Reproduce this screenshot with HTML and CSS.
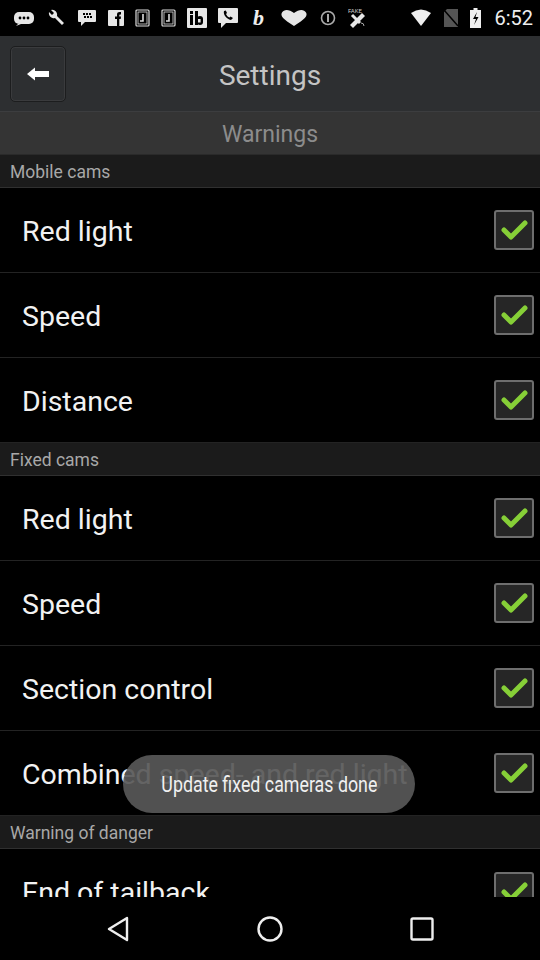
FILE: index.html
```html
<!DOCTYPE html>
<html>
<head>
<meta charset="utf-8">
<link rel="stylesheet" href="styles.css">
</head>
<body>
<div class="screen">
  <div class="statusbar">
    <div class="notif">
      <svg width="22" height="16" viewBox="0 0 22 16"><rect x="1" y="2" width="20" height="12" rx="5" fill="#e6e6e6"/><path d="M5 14 L3 16 L8 14Z" fill="#e6e6e6"/><circle cx="7" cy="8" r="1.4" fill="#000"/><circle cx="11" cy="8" r="1.4" fill="#000"/><circle cx="15" cy="8" r="1.4" fill="#000"/></svg>
      <svg width="20" height="20" viewBox="0 0 20 20"><path d="M3 4 A5 5 0 0 0 9 10 L16 17 L18 15 L11 8 A5 5 0 0 0 5 2 L8 5 L6 7 Z" fill="#e6e6e6"/></svg>
      <svg width="20" height="18" viewBox="0 0 20 18"><rect x="1" y="1" width="18" height="12" rx="1" fill="#e6e6e6"/><path d="M4 13 L4 17 L8 13Z" fill="#e6e6e6"/><g fill="#000"><rect x="6" y="4" width="2" height="2"/><rect x="9" y="4" width="2" height="2"/><rect x="12" y="4" width="2" height="2"/><rect x="7" y="7" width="2" height="2"/><rect x="10" y="7" width="2" height="2"/><rect x="13" y="7" width="2" height="2"/></g></svg>
      <svg width="16" height="16" viewBox="0 0 16 16"><rect x="0" y="0" width="16" height="16" rx="1" fill="#e6e6e6"/><path d="M9 16 V9 H7 V6.5 H9 V4.5 C9 2.8 10 2 11.5 2 H13 V4.5 H12 C11.5 4.5 11.3 4.8 11.3 5.2 V6.5 H13 L12.7 9 H11.3 V16Z" fill="#000"/></svg>
      <svg width="15" height="18" viewBox="0 0 15 18"><rect x="1" y="1" width="13" height="16" rx="1" fill="none" stroke="#ddd" stroke-width="1.2"/><rect x="3" y="3" width="9" height="12" fill="none" stroke="#ddd" stroke-width="0.8"/><path d="M8 5 V12 H5" fill="none" stroke="#ddd" stroke-width="1.6"/></svg>
      <svg width="15" height="18" viewBox="0 0 15 18"><rect x="1" y="1" width="13" height="16" rx="1" fill="none" stroke="#ddd" stroke-width="1.2"/><rect x="3" y="3" width="9" height="12" fill="none" stroke="#ddd" stroke-width="0.8"/><path d="M8 5 V12 H5" fill="none" stroke="#ddd" stroke-width="1.6"/></svg>
      <svg width="20" height="20" viewBox="0 0 20 20"><rect x="0" y="0" width="20" height="20" rx="1" fill="#e6e6e6"/><rect x="3" y="3" width="3" height="3" fill="#000"/><rect x="3" y="7" width="3" height="10" fill="#000"/><rect x="8" y="3" width="3" height="14" fill="#000"/><rect x="10" y="8" width="6" height="9" rx="3" fill="#000"/><rect x="11" y="11" width="2.6" height="3.5" fill="#e6e6e6"/></svg>
      <svg width="20" height="20" viewBox="0 0 20 20"><rect x="0" y="0" width="20" height="15" rx="1" fill="#e6e6e6"/><path d="M3 15 L3 20 L8 15Z" fill="#e6e6e6"/><path d="M6 3 C5 6 8 11 13 12 L15 10 L12.5 8.5 L11.5 9.5 C10 9 8.5 7.5 8 6 L9 5 L7.8 2.5Z" fill="#000"/></svg>
      <span class="bglyph">b</span>
      <svg width="30" height="18" viewBox="0 0 30 18"><path d="M15 17 C4 10 1 7 3 3.5 C5 0 10 0 15 4 C20 0 25 0 27 3.5 C29 7 26 10 15 17Z" fill="#e6e6e6"/></svg>
      <svg width="16" height="16" viewBox="0 0 16 16"><circle cx="8" cy="8" r="6.5" fill="none" stroke="#aaa" stroke-width="1.6"/><rect x="7" y="4" width="2" height="8" fill="#aaa"/></svg>
      <svg width="20" height="22" viewBox="0 0 20 22"><text x="1" y="6" font-size="6" fill="#ccc" font-family="Roboto">FAKE</text><path d="M3 18 L15 6 L18 9 L6 21Z" fill="#e6e6e6"/><path d="M5 8 L9 12 M13 16 L9 12" stroke="#e6e6e6" stroke-width="3"/><path d="M14 16 A3 3 0 0 1 17 19" stroke="#aaa" fill="none"/></svg>
    </div>
    <div class="sys">
      <svg width="22" height="18" viewBox="0 0 22 18"><path d="M1 4 Q11 -3 21 4 L11 17Z" fill="#eee"/></svg>
      <svg width="16" height="18" viewBox="0 0 16 18"><path d="M4 0 H15 V18 H1 V3Z" fill="#555"/><path d="M1 1 L15 17" stroke="#000" stroke-width="1.5"/></svg>
      <svg width="11" height="20" viewBox="0 0 11 20"><rect x="3.5" y="0" width="4" height="2" fill="#eee"/><rect x="0" y="2" width="11" height="18" fill="#eee"/><path d="M7 4 L3 11 H6 L4 17 L8.5 9 H5.5Z" fill="#000"/></svg>
      <span class="time">6:52</span>
    </div>
  </div>

  <div class="header">
    <button class="back">
      <svg width="24" height="14" viewBox="0 0 24 14"><path d="M1 7 L9 0.5 V4 H23 V10 H9 V13.5Z" fill="#fff"/></svg>
    </button>
    <div class="title">Settings</div>
  </div>

  <div class="subheader">Warnings</div>

  <div class="content">
    <div class="section">Mobile cams</div>
    <div class="row"><span class="label">Red light</span><span class="check"></span></div>
    <div class="row"><span class="label">Speed</span><span class="check"></span></div>
    <div class="row"><span class="label">Distance</span><span class="check"></span></div>
    <div class="section">Fixed cams</div>
    <div class="row"><span class="label">Red light</span><span class="check"></span></div>
    <div class="row"><span class="label">Speed</span><span class="check"></span></div>
    <div class="row"><span class="label">Section control</span><span class="check"></span></div>
    <div class="row"><span class="label">Combined speed- and red light</span><span class="check"></span></div>
    <div class="section">Warning of danger</div>
    <div class="row"><span class="label">End of tailback</span><span class="check"></span></div>
  </div>

  <div class="toast"><span class="toast-text">Update fixed cameras done</span></div>

  <div class="navbar">
    <span class="navbtn"><svg width="24" height="26" viewBox="0 0 24 26"><path d="M21 2 L3 13 L21 24Z" fill="none" stroke="#eee" stroke-width="2.4" stroke-linejoin="round"/></svg></span>
    <span class="navbtn"><svg width="28" height="28" viewBox="0 0 28 28"><circle cx="14" cy="14" r="11.5" fill="none" stroke="#eee" stroke-width="2.4"/></svg></span>
    <span class="navbtn"><svg width="24" height="24" viewBox="0 0 24 24"><rect x="1.5" y="1.5" width="21" height="21" rx="1.5" fill="none" stroke="#eee" stroke-width="2.4"/></svg></span>
  </div>
</div>
</body>
</html>
```

FILE: styles.css
```css
* { box-sizing: border-box; }
html, body { margin: 0; padding: 0; background: #000; }
body { font-family: Roboto, "Noto Sans", sans-serif; }
.screen {
  width: 540px; height: 960px; position: relative;
  display: flex; flex-direction: column; overflow: hidden; background: #000;
}
.statusbar {
  height: 36px; flex: none; background: #000;
  display: flex; align-items: center; justify-content: space-between;
  padding: 0 7px 0 13px;
}
.notif { display: flex; align-items: center; gap: 11px; }
.bglyph {
  font-family: "Liberation Serif", serif; font-style: italic; font-weight: bold;
  color: #eee; font-size: 22px; line-height: 1; margin: 0 4px;
}
.sys { display: flex; align-items: center; gap: 11px; }
.time { color: #eee; font-size: 20px; margin-left: 2px; }
.header {
  height: 76px; flex: none; background: #2d2f31;
  border-bottom: 1px solid #3c3d3f;
  display: flex; align-items: center; position: relative;
  padding-left: 10px;
}
.back {
  width: 56px; height: 56px; background: #2d2f31;
  border: 1px solid #1c1d1e; border-radius: 5px;
  box-shadow: inset 0 0 0 1px #3a3b3d;
  display: flex; align-items: center; justify-content: center; padding: 0;
}
.title {
  position: absolute; left: 0; right: 0; text-align: center;
  color: #c4c4c4; font-size: 28px; pointer-events: none; padding-top: 4px;
}
.subheader {
  height: 43px; flex: none; background: #343434;
  border-bottom: 1px solid #2a2a2a;
  color: #8c8c8c; font-size: 23px; padding-top: 2px;
  display: flex; align-items: center; justify-content: center;
}
.content { flex: 1; overflow: hidden; }
.section {
  height: 33px; background: #1b1b1b; border-bottom: 1px solid #303030;
  color: #a8a8a8; font-size: 17.5px; padding-left: 10px; padding-top: 1px;
  display: flex; align-items: center;
}
.row {
  height: 85px; border-bottom: 1px solid #232323;
  display: flex; align-items: center; justify-content: space-between;
  padding: 0 6px 0 22px;
}
.row:last-child { border-bottom: none; }
.label { color: #f2f2f2; font-size: 28.5px; white-space: nowrap; padding-top: 2px; }
.check {
  width: 40px; height: 40px; flex: none;
  border: 2px solid #6e6e6e; border-radius: 3px; background: #262626;
  background-image: url("data:image/svg+xml;utf8,<svg xmlns='http://www.w3.org/2000/svg' viewBox='0 0 36 36'><path d='M8 18 L15 25 L29 11' fill='none' stroke='%2386cf37' stroke-width='5' stroke-linecap='round' stroke-linejoin='round'/></svg>");
  background-size: 36px 36px; background-position: center; background-repeat: no-repeat;
}
.toast {
  position: absolute; left: 123px; top: 755px; width: 292px; height: 58px;
  border-radius: 29px; background: rgba(88, 88, 88, 0.92);
  color: #f0f0f0; font-family: Roboto, sans-serif;
  font-size: 22px; display: flex; align-items: center; justify-content: center;
}
.toast-text { display: inline-block; white-space: nowrap; transform: scaleX(0.81); }
.navbar {
  height: 63px; flex: none; background: #000;
  display: flex; align-items: center; justify-content: center;
  gap: 112px;
}
.navbtn { width: 40px; display: flex; justify-content: center; align-items: center; }
```
